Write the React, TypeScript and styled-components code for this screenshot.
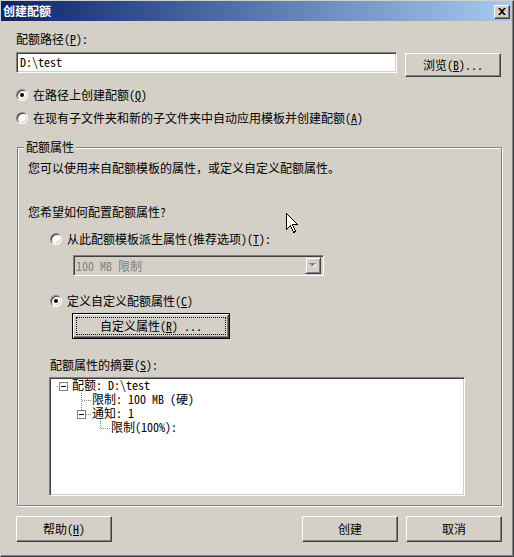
import styled, { createGlobalStyle } from "styled-components";

const GlobalStyle = createGlobalStyle`
  html, body {
    margin: 0;
    padding: 0;
    background: #d4d0c8;
  }
  body {
    font-family: "Noto Sans Mono CJK SC", "Noto Sans CJK SC", sans-serif;
    font-size: 12px;
    line-height: 14px;
    color: #000;
  }
`;

const Window = styled.div`
  box-sizing: border-box;
  position: relative;
  width: 514px;
  height: 557px;
  background: #d4d0c8;
  border: 1px solid;
  border-color: #d4d0c8 #404040 #404040 #d4d0c8;
  box-shadow: inset -1px -1px 0 #808080;
  display: flex;
  flex-direction: column;
`;

const TitleBar = styled.div`
  height: 20px;
  margin-right: 1px;
  padding: 0 2px 0 2px;
  display: flex;
  align-items: center;
  justify-content: space-between;
  background: linear-gradient(to right, #0a246a, #a6caf0);
  color: #fff;
  font-family: "Noto Sans CJK SC", sans-serif;
  font-weight: bold;
`;

const CloseButton = styled.div`
  box-sizing: border-box;
  width: 16px;
  height: 14px;
  margin-top: 1px;
  display: flex;
  align-items: center;
  justify-content: center;
  background: #d4d0c8;
  border: 1px solid;
  border-color: #fff #404040 #404040 #fff;
  box-shadow: inset -1px -1px 0 #808080;
`;

const Client = styled.div`
  display: flex;
  flex-direction: column;
  align-items: flex-start;
  padding: 11px 10px 0 15px;
`;

const Text = styled.div<{ $top?: number; $left?: number }>`
  margin-top: ${(p) => p.$top ?? 0}px;
  margin-left: ${(p) => p.$left ?? 0}px;
  white-space: nowrap;
`;

const Mn = styled.span`
  text-decoration: underline;
`;

const PathRow = styled.div`
  margin-top: 6px;
  display: flex;
  align-items: flex-start;
  gap: 8px;
`;

const Sunken = styled.div`
  box-sizing: border-box;
  border: 1px solid;
  border-color: #808080 #fff #fff #808080;
  box-shadow: inset 1px 1px 0 #404040, inset -1px -1px 0 #d4d0c8;
`;

const PathInput = styled(Sunken)`
  width: 381px;
  height: 21px;
  padding: 2px 0 0 3px;
  background: #fff;
`;

const Button = styled.div<{ $width: number; $height?: number; $top?: number; $left?: number; $isDefault?: boolean }>`
  box-sizing: border-box;
  width: ${(p) => p.$width}px;
  height: ${(p) => p.$height ?? 26}px;
  margin-top: ${(p) => p.$top ?? 0}px;
  margin-left: ${(p) => p.$left ?? 0}px;
  display: flex;
  align-items: center;
  justify-content: center;
  padding: ${(p) => (p.$isDefault ? "3px" : "0")};
  background: #d4d0c8;
  border: 1px solid;
  border-color: ${(p) => (p.$isDefault ? "#000" : "#fff #404040 #404040 #fff")};
  box-shadow: ${(p) =>
    p.$isDefault
      ? "inset 1px 1px 0 #fff, inset -1px -1px 0 #404040, inset -2px -2px 0 #808080"
      : "inset -1px -1px 0 #808080"};
  white-space: pre;
`;

const FocusRing = styled.div`
  flex: 1;
  align-self: stretch;
  display: flex;
  align-items: center;
  justify-content: center;
  border: 1px dotted #000;
`;

const RadioOption = styled.div<{ $top: number; $left?: number }>`
  margin-top: ${(p) => p.$top}px;
  margin-left: ${(p) => p.$left ?? 0}px;
  display: flex;
  align-items: center;
  gap: 5px;
  white-space: nowrap;
`;

const RadioDot = styled.span<{ $checked?: boolean }>`
  box-sizing: border-box;
  width: 12px;
  height: 12px;
  border-radius: 50%;
  border: 1px solid;
  border-color: #808080 #fff #fff #808080;
  box-shadow: inset 1px 1px 0 #404040, inset -1px -1px 0 #d4d0c8;
  background: #fff;
  display: flex;
  align-items: center;
  justify-content: center;

  &::after {
    content: "";
    width: 4px;
    height: 4px;
    border-radius: 50%;
    background: ${(p) => (p.$checked ? "#000" : "transparent")};
  }
`;

const GroupBox = styled.fieldset`
  box-sizing: border-box;
  width: 485px;
  margin: 15px 0 0 1px;
  padding: 0;
  border: 1px solid #808080;
  box-shadow: 1px 1px 0 #fff, inset 1px 1px 0 #fff;
`;

const Legend = styled.legend`
  margin-left: 6px;
  padding: 0 2px;
  line-height: 14px;
  background: #d4d0c8;
`;

const GroupBody = styled.div`
  display: flex;
  flex-direction: column;
  align-items: flex-start;
  padding: 7px 0 9px 10px;
`;

const Combo = styled(Sunken)`
  width: 251px;
  height: 21px;
  margin: 9px 0 0 45px;
  padding: 2px 2px 2px 2px;
  display: flex;
  align-items: center;
  justify-content: space-between;
  color: #808080;
`;

const ComboArrow = styled.div`
  box-sizing: border-box;
  width: 16px;
  height: 17px;
  display: flex;
  align-items: center;
  justify-content: center;
  background: #d4d0c8;
  border: 1px solid;
  border-color: #d4d0c8 #404040 #404040 #d4d0c8;
  box-shadow: inset 1px 1px 0 #fff, inset -1px -1px 0 #808080;
`;

const TreeBox = styled(Sunken)`
  position: relative;
  width: 416px;
  height: 119px;
  margin: 5px 0 0 21px;
  padding: 0;
  background: #fff;
`;

const TreeLines = styled.svg`
  position: absolute;
  left: 1px;
  top: 1px;
`;

const TreeRow = styled.div<{ $indent: number }>`
  height: 14px;
  padding-left: ${(p) => p.$indent}px;
  white-space: pre;
`;

const ButtonBar = styled.div`
  width: 486px;
  margin-top: 10px;
  display: flex;
  gap: 8px;
`;

const Spacer = styled.div`
  flex: 1;
`;

const Cursor = styled.svg`
  position: absolute;
  left: 285px;
  top: 212px;
`;

const tree = [
  { indent: 22, text: "配额: D:\\test" },
  { indent: 42, text: "限制: 100 MB (硬)" },
  { indent: 42, text: "通知: 1" },
  { indent: 61, text: "限制(100%):" },
];

function MinusBox({ x, y }: { x: number; y: number }) {
  return (
    <g>
      <rect x={x + 0.5} y={y + 0.5} width={8} height={8} fill="#fff" stroke="#808080" />
      <line x1={x + 2} y1={y + 4.5} x2={x + 7} y2={y + 4.5} stroke="#000" />
    </g>
  );
}

export default function App() {
  const dot = { stroke: "#808080", strokeDasharray: "1 1", shapeRendering: "crispEdges" as const };
  return (
    <>
      <GlobalStyle />
      <Window>
        <TitleBar>
          <span>创建配额</span>
          <CloseButton>
            <svg width="8" height="7" viewBox="0 0 8 7">
              <path d="M0 0h2l2 2 2-2h2L5 3.5 8 7H6L4 5 2 7H0l3-3.5z" fill="#000" />
            </svg>
          </CloseButton>
        </TitleBar>

        <Client>
          <Text>
            配额路径(<Mn>P</Mn>):
          </Text>
          <PathRow>
            <PathInput>D:\test</PathInput>
            <Button $width={96} $height={24} $top={1}>
              浏览(<Mn>B</Mn>)...
            </Button>
          </PathRow>

          <RadioOption $top={11}>
            <RadioDot $checked />
            <span>
              在路径上创建配额(<Mn>Q</Mn>)
            </span>
          </RadioOption>
          <RadioOption $top={9}>
            <RadioDot />
            <span>
              在现有子文件夹和新的子文件夹中自动应用模板并创建配额(<Mn>A</Mn>)
            </span>
          </RadioOption>

          <GroupBox>
            <Legend>配额属性</Legend>
            <GroupBody>
              <Text>您可以使用来自配额模板的属性，或定义自定义配额属性。</Text>
              <Text $top={30}>您希望如何配置配额属性?</Text>

              <RadioOption $top={13} $left={22}>
                <RadioDot />
                <span>
                  从此配额模板派生属性(推荐选项)(<Mn>T</Mn>):
                </span>
              </RadioOption>
              <Combo>
                <span>100 MB 限制</span>
                <ComboArrow>
                  <svg width="8" height="5" viewBox="0 0 8 5">
                    <path d="M1 1h7L4.5 4.5z" fill="#fff" />
                    <path d="M0 0h7L3.5 3.5z" fill="#808080" />
                  </svg>
                </ComboArrow>
              </Combo>

              <RadioOption $top={18} $left={22}>
                <RadioDot $checked />
                <span>
                  定义自定义配额属性(<Mn>C</Mn>)
                </span>
              </RadioOption>
              <Button $width={158} $top={5} $left={44} $isDefault>
                <FocusRing>
                  自定义属性(<Mn>R</Mn>) ...
                </FocusRing>
              </Button>

              <Text $top={19} $left={22}>
                配额属性的摘要(<Mn>S</Mn>):
              </Text>
              <TreeBox>
                <TreeLines width="80" height="60">
                  <line x1={6} y1={7.5} x2={8} y2={7.5} {...dot} />
                  <MinusBox x={8} y={3} />
                  <line x1={30.5} y1={14} x2={30.5} y2={31} {...dot} />
                  <line x1={31} y1={21.5} x2={41} y2={21.5} {...dot} />
                  <MinusBox x={26} y={31} />
                  <line x1={35} y1={35.5} x2={41} y2={35.5} {...dot} />
                  <line x1={49.5} y1={40} x2={49.5} y2={49} {...dot} />
                  <line x1={50} y1={49.5} x2={60} y2={49.5} {...dot} />
                </TreeLines>
                {tree.map((row) => (
                  <TreeRow key={row.text} $indent={row.indent}>
                    {row.text}
                  </TreeRow>
                ))}
              </TreeBox>
            </GroupBody>
          </GroupBox>

          <ButtonBar>
            <Button $width={96}>
              帮助(<Mn>H</Mn>)
            </Button>
            <Spacer />
            <Button $width={96}>创建</Button>
            <Button $width={96}>取消</Button>
          </ButtonBar>
        </Client>

        <Cursor width="13" height="21" viewBox="0 0 13 21">
          <path
            d="M0.5 0.5V16.5L4.5 12.5L7.5 19.5L9.5 18.5L6.5 11.5H11.5Z"
            fill="#fff"
            stroke="#000"
            shapeRendering="crispEdges"
          />
        </Cursor>
      </Window>
    </>
  );
}
